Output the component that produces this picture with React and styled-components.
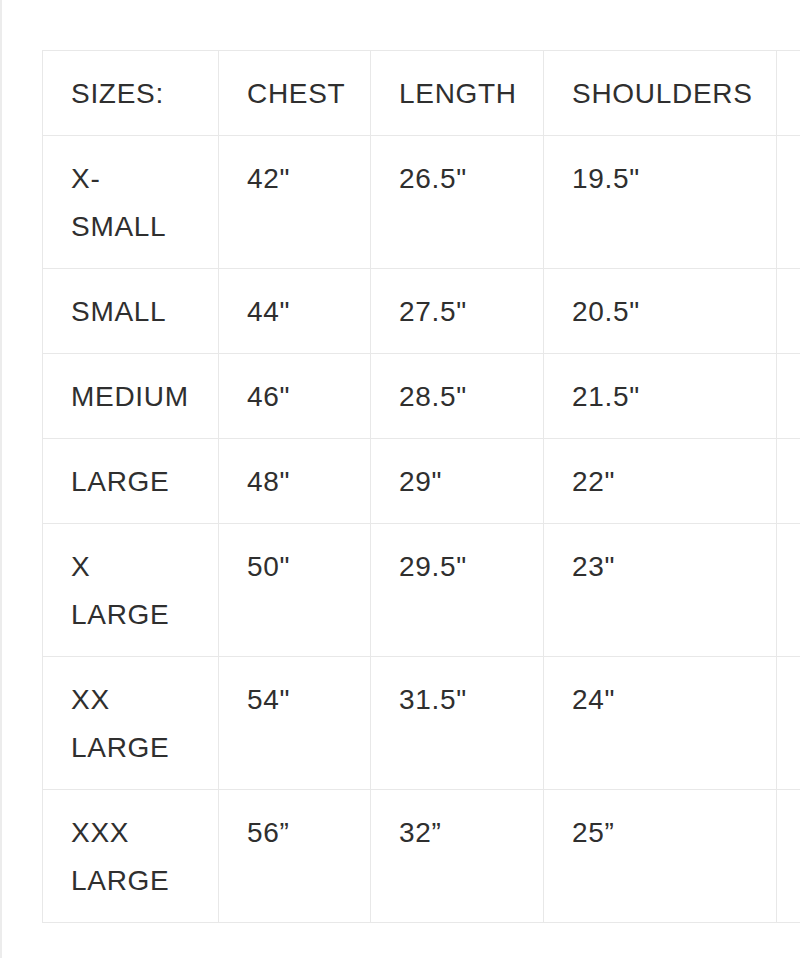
import React from 'react';
import styled, { createGlobalStyle } from 'styled-components';

const GlobalStyle = createGlobalStyle`
  html, body {
    margin: 0;
    padding: 0;
    background: #ffffff;
    overflow: hidden;
  }
`;

// last column runs past the right edge of the frame
const columns = [
  { label: 'SIZES:', width: 176 },
  { label: 'CHEST', width: 152 },
  { label: 'LENGTH', width: 173 },
  { label: 'SHOULDERS', width: 233 },
  { label: '', width: 200 },
];

const rows = [
  ['X-SMALL', '42"', '26.5"', '19.5"', ''],
  ['SMALL', '44"', '27.5"', '20.5"', ''],
  ['MEDIUM', '46"', '28.5"', '21.5"', ''],
  ['LARGE', '48"', '29"', '22"', ''],
  ['X LARGE', '50"', '29.5"', '23"', ''],
  ['XX LARGE', '54"', '31.5"', '24"', ''],
  ['XXX LARGE', '56\u201D', '32\u201D', '25\u201D', ''],
];

const Page = styled.div`
  min-height: 958px;
  box-sizing: border-box;
  border-left: 2px solid #ececec;
  padding: 50px 0 0 40px;
  font-family: "Liberation Sans", Arial, sans-serif;
  color: #2f2f2f;
`;

const Table = styled.table`
  border-collapse: collapse;
  table-layout: fixed;
  width: ${props => props.total}px;
`;

const Cell = styled.td`
  border: 1px solid #e8e8e8;
  padding: 19px 24px 17px 28px;
  font-size: 28px;
  line-height: 48px;
  letter-spacing: 0.7px;
  text-align: left;
  vertical-align: ${props => (props.head ? 'middle' : 'top')};
  font-weight: normal;
`;

const App = () => {
  const total = columns.reduce((sum, c) => sum + c.width, 0);
  return (
    <Page>
      <GlobalStyle />
      <Table total={total}>
        <colgroup>
          {columns.map((c, i) => (
            <col key={i} style={{ width: c.width }} />
          ))}
        </colgroup>
        <thead>
          <tr>
            {columns.map((c, i) => (
              <Cell as="th" head key={i}>{c.label}</Cell>
            ))}
          </tr>
        </thead>
        <tbody>
          {rows.map((row, r) => (
            <tr key={r}>
              {row.map((value, i) => (
                <Cell key={i}>{value}</Cell>
              ))}
            </tr>
          ))}
        </tbody>
      </Table>
    </Page>
  );
};

export default App;
